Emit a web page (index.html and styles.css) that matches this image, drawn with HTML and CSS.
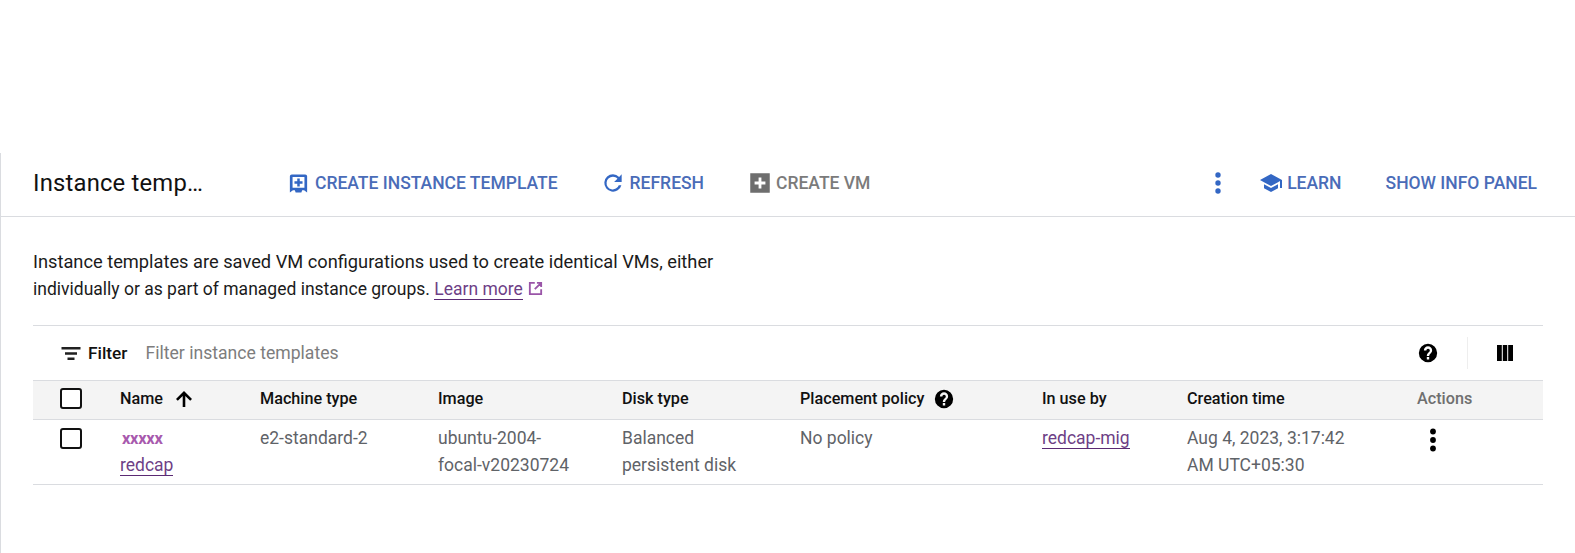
FILE: index.html
```html
<!DOCTYPE html>
<html lang="en">
<head>
<meta charset="utf-8">
<title>Instance templates</title>
<link rel="stylesheet" href="styles.css">
</head>
<body>
<main class="page">
  <header class="toolbar">
    <h1 class="title">Instance temp…</h1>
    <div class="actions">
      <button class="btn btn-create"><svg class="ic-create" viewBox="0 0 24 24"><path fill="#3367c4" fill-rule="evenodd" d="M5 2.500h14a2 2 0 0 1 2 2v17l-3.200-2.400h-2L15 21.500H9l-.8-2.400h-2L3 21.500v-17a2 2 0 0 1 2-2zm.8 2.700v11.300h12.400V5.200H5.800zm4.900 1.600h2.600v2.900h2.900v2.600h-2.900v2.900h-2.600v-2.900H7.800V9.700h2.900V6.800z"/></svg>CREATE INSTANCE TEMPLATE</button>
      <button class="btn btn-refresh"><svg class="ic" viewBox="0 0 24 24"><path fill="#3367c4" d="M17.650 6.350A7.960 7.960 0 0 0 12 4a8 8 0 1 0 7.730 10h-2.400A5.800 5.800 0 1 1 12 6.300c1.600 0 3.050.65 4.100 1.700L13 11h7V4l-2.350 2.350z"/></svg>REFRESH</button>
      <button class="btn btn-vm"><svg class="ic" viewBox="0 0 24 24"><path fill="#6e6e6e" fill-rule="evenodd" d="M3 3h18v18H3zM10.700 7v3.700H7v2.600h3.700V17h2.600v-3.700H17v-2.600h-3.700V7z"/></svg>CREATE VM</button>
    </div>
    <div class="actions-right">
      <svg class="kebab" viewBox="0 0 24 24"><circle fill="#3367c4" cx="12" cy="4" r="2.700"/><circle fill="#3367c4" cx="12" cy="12" r="2.700"/><circle fill="#3367c4" cx="12" cy="20" r="2.700"/></svg>
      <button class="btn btn-learn"><svg class="ic-learn" viewBox="0 0 24 24"><path fill="#3367c4" d="M12 3 1 9l4 2.180 7 3.820 7-3.820 2-1.090V17h2V9L12 3zM5 13.180v4L12 21l7-3.820v-4L12 17l-7-3.820z"/></svg>LEARN</button>
      <button class="btn btn-info">SHOW INFO PANEL</button>
    </div>
  </header>

  <section class="content">
    <p class="intro"><span class="intro-first">Instance templates are saved VM configurations used to create identical VMs, either</span><br>individually or as part of managed instance groups. <a class="link" href="#">Learn more</a><svg class="ext" viewBox="0 0 24 24"><path fill="none" stroke="#9a55a8" stroke-width="2.600" d="M11 4H4v16h16v-7M14 4h6v6M20 4l-9 9"/></svg></p>

    <div class="filterbar">
      <svg class="filter-ic" viewBox="0 0 24 24"><path fill="#212121" d="M2.500 6h19v2.500h-19zM6 11.200h12v2.500H6zM8.500 16.500h7V19h-7z"/></svg>
      <span class="filter-label">Filter</span>
      <span class="filter-hint">Filter instance templates</span>
      <svg class="help-top" viewBox="0 0 24 24"><use href="#help"/></svg>
      <span class="divider"></span>
      <svg class="cols" viewBox="0 0 24 24"><path fill="#000" d="M4 4h4.800v16H4zM9.800 4h4.400v16H9.800zM15.200 4H20v16h-4.800z"/></svg>
    </div>

    <div class="table">
      <div class="row head">
        <div class="cell cb"><span class="checkbox"></span></div>
        <div class="cell">Name<svg class="sort" viewBox="0 0 24 24"><path fill="#000" d="M4 12l1.800 1.800 4.900-4.900V20h2.600V8.900l4.900 4.900L20 12l-8-8z"/></svg></div>
        <div class="cell">Machine type</div>
        <div class="cell">Image</div>
        <div class="cell">Disk type</div>
        <div class="cell">Placement policy<svg class="help" viewBox="0 0 24 24"><use href="#help"/></svg></div>
        <div class="cell">In use by</div>
        <div class="cell">Creation time</div>
        <div class="cell muted">Actions</div>
      </div>
      <div class="row body">
        <div class="cell cb"><span class="checkbox"></span></div>
        <div class="cell"><span class="redact">xxxxx</span><br><a class="link" href="#">redcap</a></div>
        <div class="cell">e2-standard-2</div>
        <div class="cell">ubuntu-2004-<br>focal-v20230724</div>
        <div class="cell">Balanced<br>persistent disk</div>
        <div class="cell">No policy</div>
        <div class="cell"><a class="link" href="#">redcap-mig</a></div>
        <div class="cell">Aug 4, 2023, 3:17:42<br>AM UTC+05:30</div>
        <div class="cell"><svg class="row-kebab" viewBox="0 0 24 24"><circle cx="12" cy="3.500" r="2.900"/><circle cx="12" cy="12" r="2.900"/><circle cx="12" cy="20.500" r="2.900"/></svg></div>
      </div>
    </div>
  </section>
</main>
<svg class="defs" aria-hidden="true"><defs><path id="help" fill="#000" fill-rule="evenodd" d="M12 2a10 10 0 1 0 0 20 10 10 0 0 0 0-20zm1.300 17h-2.600v-2.600h2.600V19zm2.200-7.200-.9.9c-.8.8-1.300 1.400-1.300 2.700h-2.600v-.5c0-1.200.5-2.200 1.300-3l1.400-1.400c.4-.4.600-.8.600-1.300a1.900 1.900 0 0 0-3.800 0H7.500a4.500 4.500 0 0 1 9 0c0 1-.4 1.900-1 2.600z"/></defs></svg>
</body>
</html>
```

FILE: styles.css
```css
* { box-sizing: border-box; }
html, body { margin: 0; padding: 0; background: #fff; }
body { font-family: Roboto, "Liberation Sans", sans-serif; color: #202124; height: 553px; overflow: hidden; }
.defs { width: 0; height: 0; display: block; }
.page { margin-top: 153px; border-left: 1px solid #dadce0; height: 400px; }

.toolbar { display: flex; align-items: center; height: 64px; border-bottom: 1px solid #dadce0; padding: 0 38px 3px 32px; }
.title { margin: 0; width: 254px; font-size: 23.800px; font-weight: 400; color: #111; letter-spacing: 0.2px; }
.actions { display: flex; align-items: center; gap: 42px; }
.actions-right { display: flex; align-items: center; margin-left: auto; }
.btn { display: inline-flex; align-items: center; gap: 2px; border: 0; background: none; padding: 0; font: 500 17.500px Roboto, sans-serif; color: #4a6cb8; white-space: nowrap; }
.btn-create { gap: 5px; }
.btn-refresh { gap: 4px; }
.btn-vm { color: #7b7b7b; gap: 3px; margin-left: 1px; }
.ic { width: 26px; height: 26px; flex: none; }
.ic-create { width: 23px; height: 23px; flex: none; }
.ic-learn { width: 24px; height: 24px; flex: none; }
.btn-learn { gap: 4px; margin-right: 44px; }
.kebab { width: 24px; height: 24px; margin-right: 29px; }

.content { padding: 31px 32px 0 32px; }
.intro { margin: 0; font-size: 17.500px; line-height: 27px; color: #1b1b1b; }
.intro-first { font-size: 18.250px; }
.link { color: #6e3f86; text-decoration: none; border-bottom: 1px solid #5b2a73; }
.ext { width: 17px; height: 17px; margin-left: 4px; vertical-align: -2px; }

.filterbar { display: flex; align-items: center; height: 55px; margin-top: 22px; border-top: 1px solid #dadce0; padding: 0 26px 0 26px; }
.filter-ic { width: 24px; height: 24px; margin-right: 5px; flex: none; }
.filter-label { font-size: 17.300px; font-weight: 500; color: #111; margin-right: 18px; }
.filter-hint { font-size: 17.600px; color: #7d7d7d; flex: 1; }
.help-top { width: 22px; height: 22px; margin-right: 28px; }
.divider { width: 1px; height: 32px; background: #eee; margin-right: 25px; }
.cols { width: 24px; height: 24px; }

.table { font-size: 16.200px; }
.row { display: grid; grid-template-columns: 87px 140px 178px 184px 178px 242px 145px 230px 126px; }
.head { height: 40px; align-items: center; background: #f4f4f4; border-top: 1px solid #dadce0; border-bottom: 1px solid #dadce0; font-weight: 500; color: #111; padding-bottom: 3px; }
.body { height: 65px; border-bottom: 1px solid #dadce0; color: #5f6368; font-size: 17.500px; line-height: 27px; padding-top: 5px; }
.head .cell { display: flex; align-items: center; }
.cb { padding-left: 27px; }
.checkbox { display: block; width: 22px; height: 21px; border: 2px solid #111; border-radius: 3px; background: #fff; }
.body .checkbox { margin-top: 3px; }
.muted { color: #6f6f6f; }
.sort { width: 24px; height: 24px; margin-left: 9px; }
.help { width: 22px; height: 22px; margin-left: 9px; }
.redact { color: #a85aae; font-weight: 700; font-size: 16.500px; letter-spacing: -0.3px; padding-left: 2px; }
.row-kebab { width: 24px; height: 24px; display: block; margin-left: 4px; margin-top: 3px; }
```
